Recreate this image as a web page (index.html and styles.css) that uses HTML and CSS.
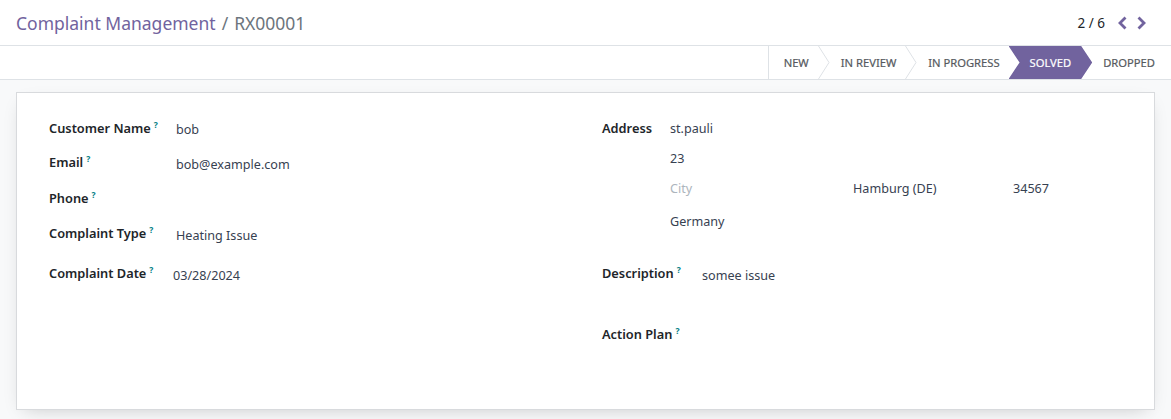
FILE: index.html
```html
<!DOCTYPE html>
<html>
<head>
<meta charset="utf-8">
<link rel="stylesheet" href="styles.css">
</head>
<body>
<div class="control-panel">
  <div class="breadcrumb">
    <span class="crumb-link">Complaint Management</span>
    <span class="crumb-sep">/</span>
    <span class="crumb-current">RX00001</span>
  </div>
  <div class="pager">
    <span class="pager-value">2 / 6</span>
    <button class="pager-btn" aria-label="Previous">
      <svg width="10" height="14" viewBox="0 0 10 14"><polyline points="7.5,2.5 3,7 7.5,11.5" fill="none" stroke="#71639e" stroke-width="2.8" stroke-linecap="square"/></svg>
    </button>
    <button class="pager-btn" aria-label="Next">
      <svg width="10" height="14" viewBox="0 0 10 14"><polyline points="2.5,2.5 7,7 2.5,11.5" fill="none" stroke="#71639e" stroke-width="2.8" stroke-linecap="square"/></svg>
    </button>
  </div>
</div>

<div class="statusbar">
  <div class="stages">
    <div class="stage stage-first">NEW</div>
    <svg class="chev" width="12" height="33" viewBox="0 0 12 33"><polyline points="0.5,0 11,16.5 0.5,33" fill="none" stroke="#dee2e6" stroke-width="1"/></svg>
    <div class="stage">IN REVIEW</div>
    <svg class="chev" width="12" height="33" viewBox="0 0 12 33"><polyline points="0.5,0 11,16.5 0.5,33" fill="none" stroke="#dee2e6" stroke-width="1"/></svg>
    <div class="stage">IN PROGRESS</div>
    <div class="stage stage-active">SOLVED</div>
    <div class="stage stage-last">DROPPED</div>
  </div>
</div>

<div class="content">
  <div class="sheet">
    <div class="group group-left">
      <div class="row r1"><div class="label">Customer Name<sup>?</sup></div><div class="value">bob</div></div>
      <div class="row r2"><div class="label">Email<sup>?</sup></div><div class="value v-low">bob@example.com</div></div>
      <div class="row r3"><div class="label">Phone<sup>?</sup></div><div class="value"></div></div>
      <div class="row r4"><div class="label">Complaint Type<sup>?</sup></div><div class="value v-low">Heating Issue</div></div>
      <div class="row r5"><div class="label">Complaint Date<sup>?</sup></div><div class="value v-low v-date">03/28/2024</div></div>
    </div>
    <div class="group group-right">
      <div class="address">
        <div class="label addr-label">Address</div>
        <div class="addr-lines">
          <div class="addr-line a1">st.pauli</div>
          <div class="addr-line a2">23</div>
          <div class="addr-line a3 addr-city">
            <span class="placeholder">City</span>
            <span class="state">Hamburg (DE)</span>
            <span class="zip">34567</span>
          </div>
          <div class="addr-line a4">Germany</div>
        </div>
      </div>
      <div class="row rd"><div class="label label-wide">Description<sup>?</sup></div><div class="value v-low">somee issue</div></div>
      <div class="row ra"><div class="label label-wide">Action Plan<sup>?</sup></div><div class="value"></div></div>
    </div>
  </div>
</div>
</body>
</html>
```

FILE: styles.css
```css
* { box-sizing: border-box; }
html, body { margin: 0; padding: 0; }
body {
  width: 1171px;
  height: 419px;
  overflow: hidden;
  background: #f8f9fa;
  font-family: "Noto Sans", "DejaVu Sans", sans-serif;
  font-size: 13px;
  color: #374151;
}

.control-panel {
  height: 46px;
  background: #fff;
  border-bottom: 1px solid #dee2e6;
  display: flex;
  align-items: center;
  justify-content: space-between;
  padding: 0 19px 0 16px;
}
.breadcrumb {
  font-size: 17.5px;
  display: flex;
  align-items: center;
  gap: 6px;
  padding-top: 1px;
}
.crumb-link { color: #71639e; }
.crumb-sep { color: #6c757d; }
.crumb-current { color: #6c757d; }

.pager {
  display: flex;
  align-items: center;
  padding-top: 1px;
}
.pager-value {
  color: #212529;
  font-size: 13.5px;
  margin-right: 7px;
}
.pager-btn {
  border: 0;
  background: none;
  padding: 0 5px;
  height: 20px;
  display: flex;
  align-items: center;
  cursor: pointer;
}

.statusbar {
  height: 34px;
  background: #fff;
  border-bottom: 1px solid #dee2e6;
  display: flex;
  justify-content: flex-end;
}
.stages {
  display: flex;
  height: 33px;
  align-items: stretch;
}
.stage {
  display: flex;
  align-items: center;
  font-size: 11.2px;
  font-weight: 400;
  color: #55595e;
  padding: 0 9px 0 11px;
  -webkit-text-stroke: 0.2px currentColor;
}
.stage-first {
  border-left: 1px solid #dee2e6;
  padding-left: 15px;
}
.chev { display: block; flex: none; }
.stage-active {
  background: #71639e;
  color: #fff;
  padding: 0 21px 0 21px;
  clip-path: polygon(0 0, calc(100% - 11px) 0, 100% 50%, calc(100% - 11px) 100%, 0 100%, 11px 50%);
}
.stage-last {
  padding: 0 16px 0 11px;
}

.content {
  padding: 12px 16px 0 16px;
}
.sheet {
  background: #fff;
  border: 1px solid #d8dadd;
  box-shadow: 0 6px 18px -8px rgba(0,0,0,0.22);
  height: 318px;
  display: flex;
  padding: 25px 0 0 32px;
}

.group-left { width: 553px; }
.group-right { flex: 1; }

.row {
  display: flex;
  align-items: flex-start;
}
.label {
  font-weight: 600;
  color: #212529;
  line-height: 20px;
  width: 127px;
  flex: none;
  font-size: 12.8px;
}
.label sup {
  color: #017e84;
  font-size: 8.5px;
  font-weight: 700;
  margin-left: 3px;
  vertical-align: top;
  position: relative;
  top: -3px;
}
.value {
  line-height: 20px;
  color: #374151;
  padding-top: 2px;
  font-size: 12.6px;
}
.v-low { padding-top: 3px; }
.v-date { margin-left: -3px; }

.r1 { height: 34px; }
.r2 { height: 36px; }
.r3 { height: 35px; }
.r4 { height: 40px; }
.r5 { height: 20px; }

.address { display: flex; }
.addr-label { width: 68px; }
.addr-lines { flex: 1; font-size: 12.6px; }
.addr-line { line-height: 20px; padding-top: 1px; }
.a1 { height: 30px; }
.a2 { height: 30px; }
.a3 { height: 33px; display: flex; }
.a4 { height: 52px; }
.placeholder { color: #adb5bd; width: 183px; }
.state { width: 160px; }

.label-wide { width: 100px; }
.rd { height: 61px; }
.ra { height: 20px; }
```
